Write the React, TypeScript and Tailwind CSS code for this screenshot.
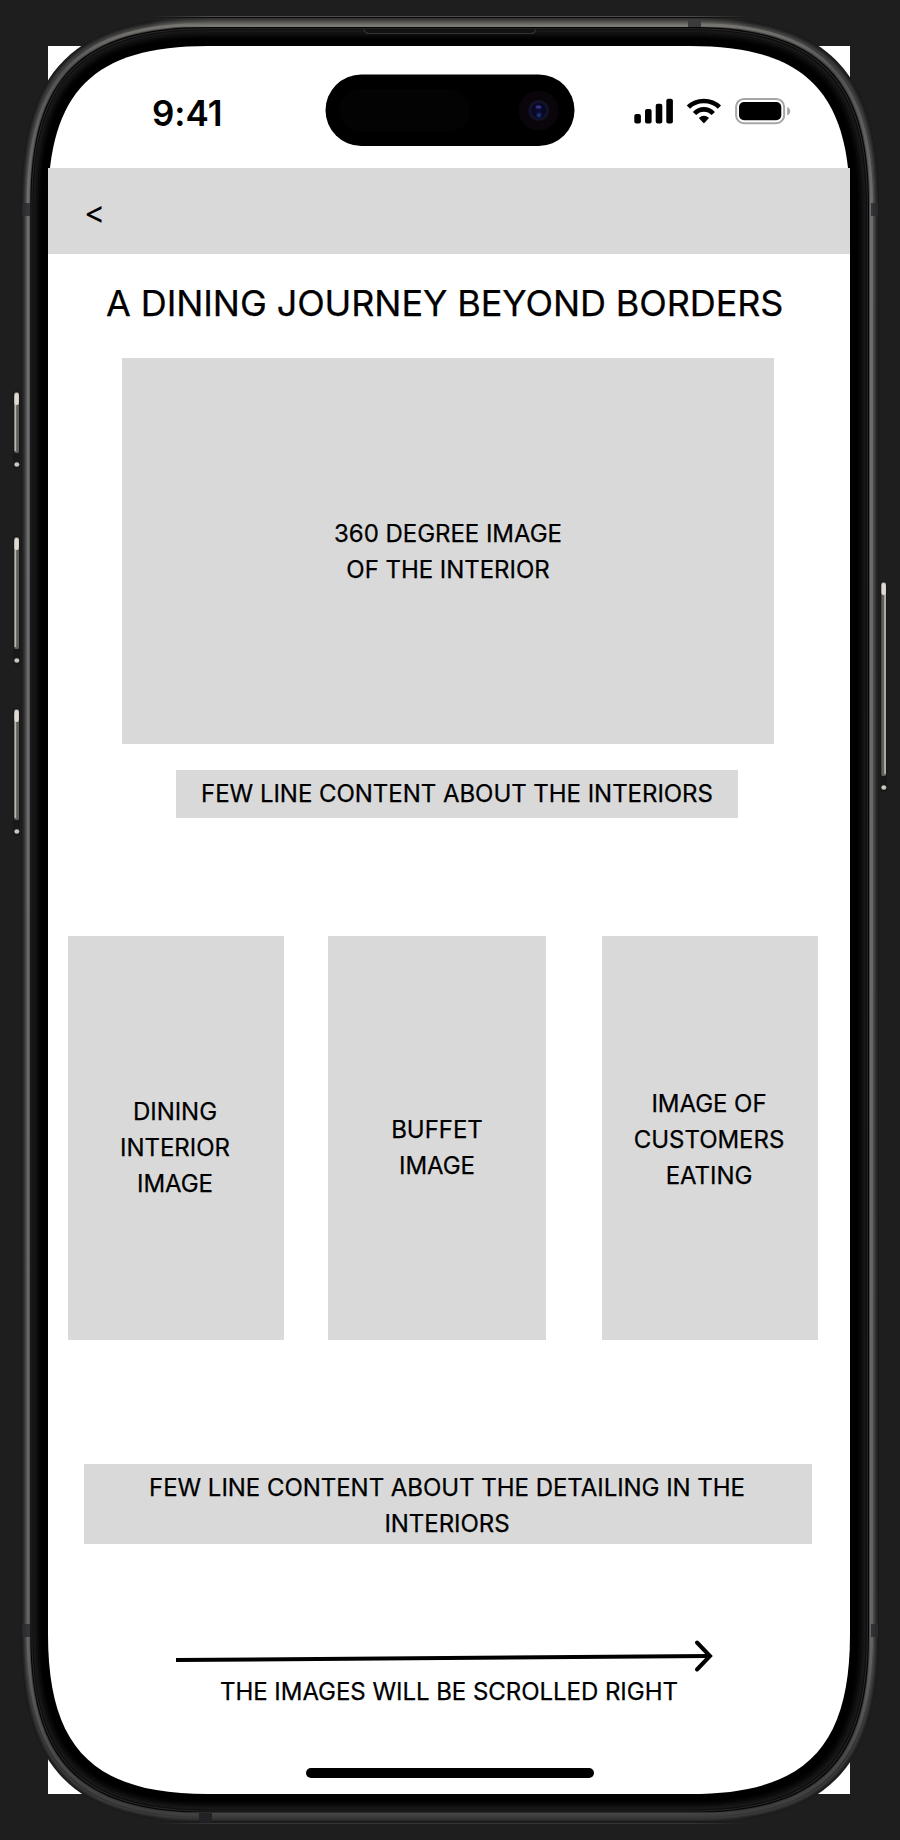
import React from "react";

type Box = { l: number; t: number; r: number; b: number; len: number; ctl: number };

const OUTER: Box = { l: 21, t: 17, r: 879, b: 1822.5, len: 186, ctl: 53 };
const INNER: Box = { l: 48, t: 46, r: 850, b: 1794, len: 160, ctl: 45.5 };

/* Continuous-corner outline at fraction k between the casing and the glass. */
function outline(k: number): string {
  const m = (key: keyof Box) => OUTER[key] + (INNER[key] - OUTER[key]) * k;
  const l = m("l"), t = m("t"), r = m("r"), b = m("b"), n = m("len"), c = m("ctl");
  return `M${l} ${t + n}C${l} ${t + c} ${l + c} ${t} ${l + n} ${t}H${r - n}C${r - c} ${t} ${r} ${t + c} ${r} ${t + n}V${b - n}C${r} ${b - c} ${r - c} ${b} ${r - n} ${b}H${l + n}C${l + c} ${b} ${l} ${b - c} ${l} ${b - n}Z`;
}

const LAYERS: [number, string][] = [
  [0, "#1b1b1b"],
  [0.04, "#232323"],
  [0.08, "#2d2d2d"],
  [0.12, "#3a3a3a"],
  [0.16, "url(#metalLow)"],
  [0.21, "url(#metalHigh)"],
  [0.31, "url(#metalLow)"],
  [0.345, "#050505"],
  [0.385, "#292929"],
  [0.42, "#0d0d0d"],
  [0.46, "#181818"],
  [0.53, "#111111"],
  [0.6, "#0a0a0a"],
  [0.67, "#040404"],
  [0.74, "#000000"],
];

function SideButton({ x, y, h, flip }: { x: number; y: number; h: number; flip?: boolean }) {
  return (
    <g>
      <rect x={x - 1} y={y - 1} width={7} height={h + 17} rx={2} fill="#181818" />
      <rect x={x + 0.3} y={y} width={4.7} height={h} rx={1.5} fill="#625f5b" />
      <rect x={flip ? x + 3.2 : x + 0.5} y={y + 4} width={1.7} height={h - 6} fill="#bbb7af" />
      <rect x={x + 0.4} y={y + 1} width={4.5} height={12} rx={2} fill="#dedad2" />
      <ellipse cx={x + 2.8} cy={y + h + 11.5} rx={2.5} ry={2.3} fill="#cac6be" />
    </g>
  );
}

function DeviceFrame() {
  return (
    <svg className="absolute left-0 top-0" width="900" height="1840" viewBox="0 0 900 1840" fill="none">
      <defs>
        <linearGradient id="metalLow" x1="0" y1="17" x2="0" y2="1823" gradientUnits="userSpaceOnUse">
          <stop offset="0" stopColor="#4c4b48" />
          <stop offset="0.025" stopColor="#3a3a3a" />
          <stop offset="0.1" stopColor="#4c4c4c" />
          <stop offset="0.9" stopColor="#4a4a4a" />
          <stop offset="0.97" stopColor="#303030" />
          <stop offset="1" stopColor="#333333" />
        </linearGradient>
        <linearGradient id="metalHigh" x1="0" y1="17" x2="0" y2="1823" gradientUnits="userSpaceOnUse">
          <stop offset="0" stopColor="#7c7a75" />
          <stop offset="0.03" stopColor="#525252" />
          <stop offset="0.1" stopColor="#6e6e6e" />
          <stop offset="0.9" stopColor="#646464" />
          <stop offset="0.97" stopColor="#464646" />
          <stop offset="1" stopColor="#3b3b3b" />
        </linearGradient>
        <linearGradient id="topBand" x1="0" y1="18" x2="0" y2="27" gradientUnits="userSpaceOnUse">
          <stop offset="0" stopColor="#2c2c2b" />
          <stop offset="0.3" stopColor="#464543" />
          <stop offset="0.75" stopColor="#75736e" />
          <stop offset="1" stopColor="#807e78" />
        </linearGradient>
        <linearGradient id="bottomBand" x1="0" y1="1812" x2="0" y2="1822" gradientUnits="userSpaceOnUse">
          <stop offset="0" stopColor="#4a4a4a" />
          <stop offset="0.6" stopColor="#383838" />
          <stop offset="1" stopColor="#242424" />
        </linearGradient>
        <linearGradient id="edgeFade" x1="150" y1="0" x2="750" y2="0" gradientUnits="userSpaceOnUse">
          <stop offset="0" stopColor="#fff" stopOpacity="0" />
          <stop offset="0.1" stopColor="#fff" />
          <stop offset="0.9" stopColor="#fff" />
          <stop offset="1" stopColor="#fff" stopOpacity="0" />
        </linearGradient>
        <mask id="edgeMask" maskUnits="userSpaceOnUse" x="0" y="0" width="900" height="1840">
          <rect x="150" y="0" width="600" height="1840" fill="url(#edgeFade)" />
        </mask>
        <radialGradient id="lens">
          <stop offset="0" stopColor="#0c0c34" />
          <stop offset="0.65" stopColor="#070722" />
          <stop offset="0.8" stopColor="#13152f" />
          <stop offset="1" stopColor="#0f1020" />
        </radialGradient>
      </defs>
      <rect x="48" y="46" width="802" height="1748" fill="#fff" />
      <SideButton x={14} y={392} h={61} />
      <SideButton x={14} y={537} h={112} />
      <SideButton x={14} y={709} h={111} />
      <SideButton x={881} y={582} h={194} flip />
      {LAYERS.map(([k, fill]) => (
        <path key={k} d={outline(k)} fill={fill} />
      ))}
      <g mask="url(#edgeMask)">
        <rect x="150" y="18" width="600" height="9" fill="url(#topBand)" />
        <rect x="150" y="1812.5" width="600" height="9.5" fill="url(#bottomBand)" />
        <path d="M150 16.5H750M150 1823H750" stroke="#4c4c4c" />
        <path d="M150 17.5H750M150 1822H750" stroke="#0a0a0a" />
      </g>
      <g fill="#292c2f">
        <rect x="688" y="19" width="13" height="8" fill="#3a3b3c" />
        <rect x="199" y="1813" width="13" height="9" fill="#202225" />
        <g opacity="0.85">
          <rect x="22" y="203" width="8" height="13" />
          <rect x="871" y="203" width="7" height="13" />
          <rect x="22" y="1624" width="8" height="13" />
          <rect x="871" y="1624" width="7" height="13" />
        </g>
      </g>
      <path d="M364 29q1 4.5 5 4.5h162q4 0 5-4.5" stroke="#303030" strokeWidth="1.2" fill="#121212" />
      <path d={outline(1)} fill="#fff" />
      <rect x="325.5" y="74.5" width="249" height="71.5" rx="35.75" fill="#000" />
      <rect x="339" y="89" width="131" height="43" rx="21.5" fill="#030303" />
      <circle cx="538.7" cy="110.5" r="20" fill="#09050a" />
      <circle cx="538.7" cy="110.5" r="10.5" fill="url(#lens)" />
      <ellipse cx="538.5" cy="107" rx="3" ry="1.8" fill="#32317c" />
      <ellipse cx="539" cy="115" rx="2.8" ry="2.4" fill="#191c62" />
      <circle cx="539" cy="115.5" r="1.2" fill="#124a60" />
    </svg>
  );
}

function StatusIcons() {
  return (
    <svg width="158" height="28" viewBox="0 0 158 28" fill="none">
      <g fill="#000">
        <rect x="0.3" y="16" width="6.6" height="9.4" rx="2" />
        <rect x="11" y="11" width="6.6" height="14.4" rx="2" />
        <rect x="21.7" y="5.8" width="6.6" height="19.6" rx="2" />
        <rect x="32.3" y="0.8" width="6.6" height="24.6" rx="2" />
      </g>
      <g stroke="#000" strokeWidth="4.6">
        <path d="M54.4 9.2Q60.5 3 69.9 3T85.4 9.2" />
        <path d="M60.5 15.5Q64.5 11.4 69.9 11.4T79.3 15.5" />
      </g>
      <path d="M64.8 20.1Q69.9 15.6 75 20.1L70.6 24.8Q69.9 25.5 69.2 24.8Z" fill="#000" />
      <rect x="102.1" y="1" width="48" height="24.2" rx="7.8" stroke="#a6a6a6" strokeWidth="2" />
      <rect x="105" y="4" width="42.3" height="18.2" rx="5" fill="#000" />
      <path d="M153.2 9v8.3q3-1.3 3-4.15T153.2 9Z" fill="#a6a6a6" />
    </svg>
  );
}

function Placeholder({ className, children }: { className: string; children: React.ReactNode }) {
  return (
    <div className={`flex items-center justify-center bg-[#d9d9d9] text-center ${className}`}>{children}</div>
  );
}

export default function App() {
  return (
    <div className="relative h-[1840px] w-[900px] overflow-hidden bg-[#1e1e1e] font-['Inter',sans-serif] text-[24px] leading-[36px] tracking-[-0.04px] text-black [-webkit-text-stroke:0.25px_black]">
      <DeviceFrame />
      <main className="relative ml-12 flex w-[802px] flex-col pt-[46px]">
        <div className="flex h-[122px] items-start justify-between pl-[104px] pr-[58px] pt-[52px]">
          <span className="text-[35px] font-semibold leading-[30px] [-webkit-text-stroke:0px]">9:41</span>
          <StatusIcons />
        </div>
        <header className="flex h-[86px] items-center bg-[#d9d9d9] pl-9">
          <button className="pt-1 text-[32px] leading-9 [-webkit-text-stroke:0px]">&lt;</button>
        </header>
        <h1 className="mt-[22px] whitespace-nowrap pl-[58px] text-[36px] leading-[54px] tracking-[-0.09px]">
          A DINING JOURNEY BEYOND BORDERS
        </h1>
        <Placeholder className="ml-[74px] mt-7 h-[386px] w-[652px] pt-0.5">
          <p>360 DEGREE IMAGE<br />OF THE INTERIOR</p>
        </Placeholder>
        <Placeholder className="ml-32 mt-[26px] h-12 w-[562px] whitespace-nowrap">
          FEW LINE CONTENT ABOUT THE INTERIORS
        </Placeholder>
        <section className="ml-5 mt-[118px] flex h-[404px]">
          <Placeholder className="w-[216px] pr-0.5 pt-5">
            <p>DINING<br />INTERIOR<br />IMAGE</p>
          </Placeholder>
          <Placeholder className="ml-11 w-[218px] pt-5">
            <p>BUFFET<br />IMAGE</p>
          </Placeholder>
          <Placeholder className="ml-14 w-[216px] pr-0.5 pt-1">
            <p>IMAGE OF<br />CUSTOMERS<br />EATING</p>
          </Placeholder>
        </section>
        <Placeholder className="ml-9 mt-[124px] h-20 w-[728px] pr-0.5 pt-1">
          <p>FEW LINE CONTENT ABOUT THE DETAILING IN THE<br />INTERIORS</p>
        </Placeholder>
        <svg className="ml-32 mt-[92px]" width="540" height="40" viewBox="0 0 540 40" fill="none" stroke="#000" strokeWidth="4">
          <path d="M0 24L533.5 20" />
          <path d="M521 6.5L534 20L521 33.5" strokeLinecap="round" />
        </svg>
        <p className="ml-[172px] -mt-[2px] whitespace-nowrap">THE IMAGES WILL BE SCROLLED RIGHT</p>
        <div className="ml-[258px] mt-[58px] h-2.5 w-72 rounded-full bg-black" />
      </main>
    </div>
  );
}
